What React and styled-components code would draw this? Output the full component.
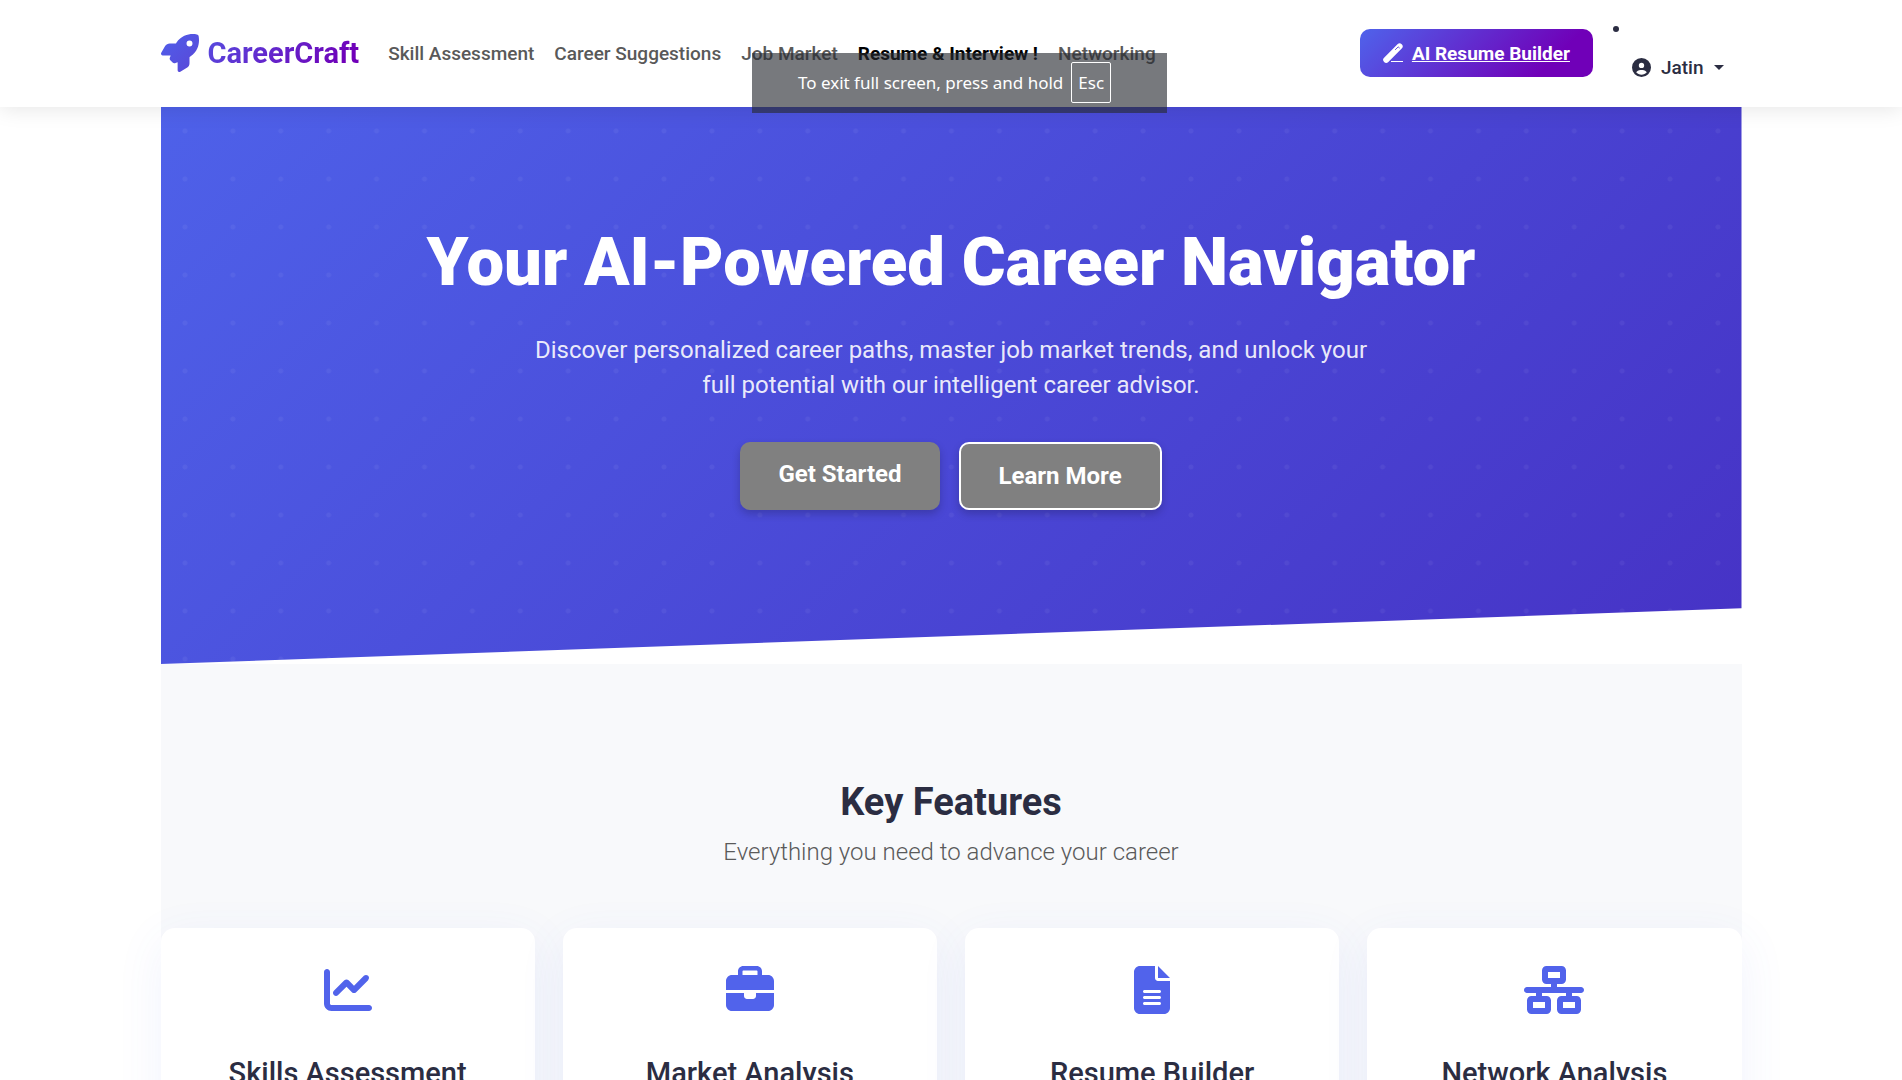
import React from "react";
import styled, { createGlobalStyle } from "styled-components";
import {
  FaRocket,
  FaCircleUser,
  FaChartLine,
  FaBriefcase,
  FaFileLines,
  FaNetworkWired,
} from "react-icons/fa6";

const brand = "#4f63eb";
const violet = "#7000b8";
const ink = "#2b2d42";

const GlobalStyle = createGlobalStyle`
  *, *::before, *::after { box-sizing: border-box; }
  body {
    margin: 0;
    background: #fff;
    color: ${ink};
    font-family: Roboto, "Liberation Sans", sans-serif;
    font-size: 19px;
    line-height: 29px;
  }
  h1, h2, h3, p, ul { margin: 0; padding: 0; }
`;

const Page = styled.div`
  height: 100vh;
  overflow: hidden;
`;

const Container = styled.div`
  width: 100%;
  max-width: 1581px;
  margin: 0 auto;
`;

const Navbar = styled.header`
  position: relative;
  z-index: 2;
  background: #fff;
  box-shadow: 0 2px 20px rgba(0, 0, 0, 0.1);
`;

const NavInner = styled(Container)`
  display: flex;
  align-items: center;
  height: 107px;
  padding-bottom: 1px;
`;

const Brand = styled.a`
  display: flex;
  align-items: center;
  gap: 9px;
  margin-right: 19px;
  font-size: 29px;
  font-weight: 700;
  text-decoration: none;
  color: transparent;
  background: linear-gradient(135deg, ${brand}, ${violet} 90%);
  background-clip: text;
  -webkit-background-clip: text;
`;

const RocketIcon = styled(FaRocket)`
  width: 38px;
  height: 38px;
  fill: url(#rocket-fill);
`;

const NavLinks = styled.nav`
  display: flex;
  flex: 1;
`;

const NavLink = styled.a`
  padding: 10px;
  color: ${(p) => (p.$active ? "#000" : "#595959")};
  font-weight: ${(p) => (p.$active ? 700 : 500)};
  text-decoration: none;
  white-space: nowrap;
`;

const BuilderLink = styled.a`
  display: flex;
  align-items: center;
  gap: 9px;
  height: 48px;
  padding: 0 23px;
  border-radius: 10px;
  background: linear-gradient(135deg, ${brand}, ${violet} 80%);
  color: #fff;
  font-weight: 700;
  white-space: nowrap;
`;

const UserList = styled.ul`
  display: flex;
  list-style: none;
  margin-left: 20px;
`;

const UserItem = styled.li`
  display: flex;
  gap: 13px;
  height: 58px;
`;

const Bullet = styled.span`
  width: 6px;
  height: 6px;
  margin-top: 2px;
  border-radius: 50%;
  background: ${ink};
`;

const UserButton = styled.button`
  display: flex;
  align-items: center;
  align-self: flex-end;
  gap: 10px;
  padding: 0 18px 0 0;
  border: 0;
  background: none;
  color: ${ink};
  font: inherit;
  font-weight: 500;
`;

const Caret = styled.span`
  border: 5px solid transparent;
  border-top-color: ${ink};
  border-bottom: 0;
`;

const Hero = styled.section`
  position: relative;
  display: flex;
  flex-direction: column;
  align-items: center;
  height: 557px;
  padding-top: 115px;
  text-align: center;
  color: #fff;
  background: linear-gradient(135deg, #4e61e9, #4632c5);
  clip-path: polygon(0 0, 100% 0, 100% 90%, 0 100%);

  &::before {
    content: "";
    position: absolute;
    inset: 0;
    background: radial-gradient(circle at 50% 50%, rgba(255, 255, 255, 0.05) 2px, transparent 3px);
    background-size: 48px 48px;
    background-repeat: round repeat;
  }
`;

const HeroTitle = styled.h1`
  position: relative;
  font-size: 67px;
  line-height: 80px;
  font-weight: 900;
`;

const HeroText = styled.p`
  position: relative;
  max-width: 840px;
  margin-top: 31px;
  font-size: 24px;
  line-height: 35px;
  color: rgba(255, 255, 255, 0.9);
`;

const HeroActions = styled.div`
  position: relative;
  display: flex;
  gap: 19px;
  margin-top: 39px;
`;

const HeroButton = styled.a`
  padding: 14px 38px;
  border: ${(p) => (p.$outlined ? "2px solid #fff" : "0")};
  border-radius: 10px;
  background: #808080;
  box-shadow: 0 4px 8px rgba(0, 0, 0, 0.2);
  color: #fff;
  font-size: 24px;
  line-height: 36px;
  font-weight: 700;
  text-decoration: none;
`;

const Features = styled.section`
  padding: 115px 0;
  background: #f8f9fb;
  text-align: center;
`;

const SectionTitle = styled.h2`
  font-size: 38px;
  line-height: 46px;
  font-weight: 700;
`;

const SectionLead = styled.p`
  margin-top: 9px;
  font-size: 24px;
  line-height: 36px;
  font-weight: 300;
  color: #5a5a5a;
`;

const CardGrid = styled.div`
  display: grid;
  grid-template-columns: repeat(4, 1fr);
  gap: 28px;
  margin-top: 58px;
`;

const Card = styled.article`
  height: 380px;
  padding: 38px 28px;
  border-radius: 14px;
  background: #fff;
  box-shadow: 0 12px 48px rgba(79, 99, 235, 0.08);

  svg {
    display: block;
    width: 60px;
    height: 48px;
    margin: 0 auto 42px;
    color: #5163eb;
  }
`;

const CardTitle = styled.h3`
  font-size: 29px;
  line-height: 35px;
  font-weight: 500;
`;

const Toast = styled.div`
  position: absolute;
  z-index: 3;
  top: 53px;
  left: calc(50% - 199px);
  display: flex;
  align-items: center;
  justify-content: center;
  gap: 8px;
  width: 415px;
  height: 60px;
  padding: 0 10px 2px 0;
  background: rgba(39, 43, 49, 0.63);
  color: #fff;
  font-family: "Noto Sans", "Open Sans", sans-serif;
  font-size: 17px;
  white-space: nowrap;
`;

const KeyCap = styled.kbd`
  padding: 5px 6px;
  border: 1px solid #fff;
  border-radius: 2px;
  font: inherit;
`;

function PenIcon() {
  return (
    <svg width="20" height="20" viewBox="0 0 20 20" aria-hidden="true">
      <path d="M3.2 16.8 16.6 3.4" stroke="#fff" strokeWidth="6" strokeLinecap="round" />
      <path d="M12.4 6.6 15.2 3.9l1.2 1" stroke="#6a4fdc" strokeWidth="1" fill="none" strokeLinecap="round" />
      <path d="M8 18.5h12" stroke="#fff" strokeWidth="1" />
    </svg>
  );
}

const links = [
  "Skill Assessment",
  "Career Suggestions",
  "Job Market",
  "Resume & Interview !",
  "Networking",
];

const features = [
  { title: "Skills Assessment", Icon: FaChartLine },
  { title: "Market Analysis", Icon: FaBriefcase },
  { title: "Resume Builder", Icon: FaFileLines },
  { title: "Network Analysis", Icon: FaNetworkWired },
];

export default function App() {
  return (
    <Page>
      <GlobalStyle />
      <svg width="0" height="0" style={{ display: "block" }} aria-hidden="true">
        <linearGradient id="rocket-fill" x1="0" y1="0" x2="1" y2="1">
          <stop offset="0" stopColor="#4f5feb" />
          <stop offset="1" stopColor="#5a46d6" />
        </linearGradient>
      </svg>
      <Navbar>
        <NavInner>
          <Brand href="#">
            <RocketIcon />
            CareerCraft
          </Brand>
          <NavLinks>
            {links.map((label) => (
              <NavLink key={label} href="#" $active={label.startsWith("Resume")}>
                {label}
              </NavLink>
            ))}
          </NavLinks>
          <BuilderLink href="#">
            <PenIcon />
            AI Resume Builder
          </BuilderLink>
          <UserList>
            <UserItem>
              <Bullet />
              <UserButton type="button">
                <FaCircleUser />
                Jatin
                <Caret />
              </UserButton>
            </UserItem>
          </UserList>
        </NavInner>
      </Navbar>
      <Container as="main">
        <Hero>
          <HeroTitle>Your AI-Powered Career Navigator</HeroTitle>
          <HeroText>
            Discover personalized career paths, master job market trends, and unlock your full
            potential with our intelligent career advisor.
          </HeroText>
          <HeroActions>
            <HeroButton href="#">Get Started</HeroButton>
            <HeroButton href="#" $outlined>
              Learn More
            </HeroButton>
          </HeroActions>
        </Hero>
        <Features>
          <SectionTitle>Key Features</SectionTitle>
          <SectionLead>Everything you need to advance your career</SectionLead>
          <CardGrid>
            {features.map(({ title, Icon }) => (
              <Card key={title}>
                <Icon />
                <CardTitle>{title}</CardTitle>
              </Card>
            ))}
          </CardGrid>
        </Features>
      </Container>
      <Toast>
        To exit full screen, press and hold
        <KeyCap>Esc</KeyCap>
      </Toast>
    </Page>
  );
}
